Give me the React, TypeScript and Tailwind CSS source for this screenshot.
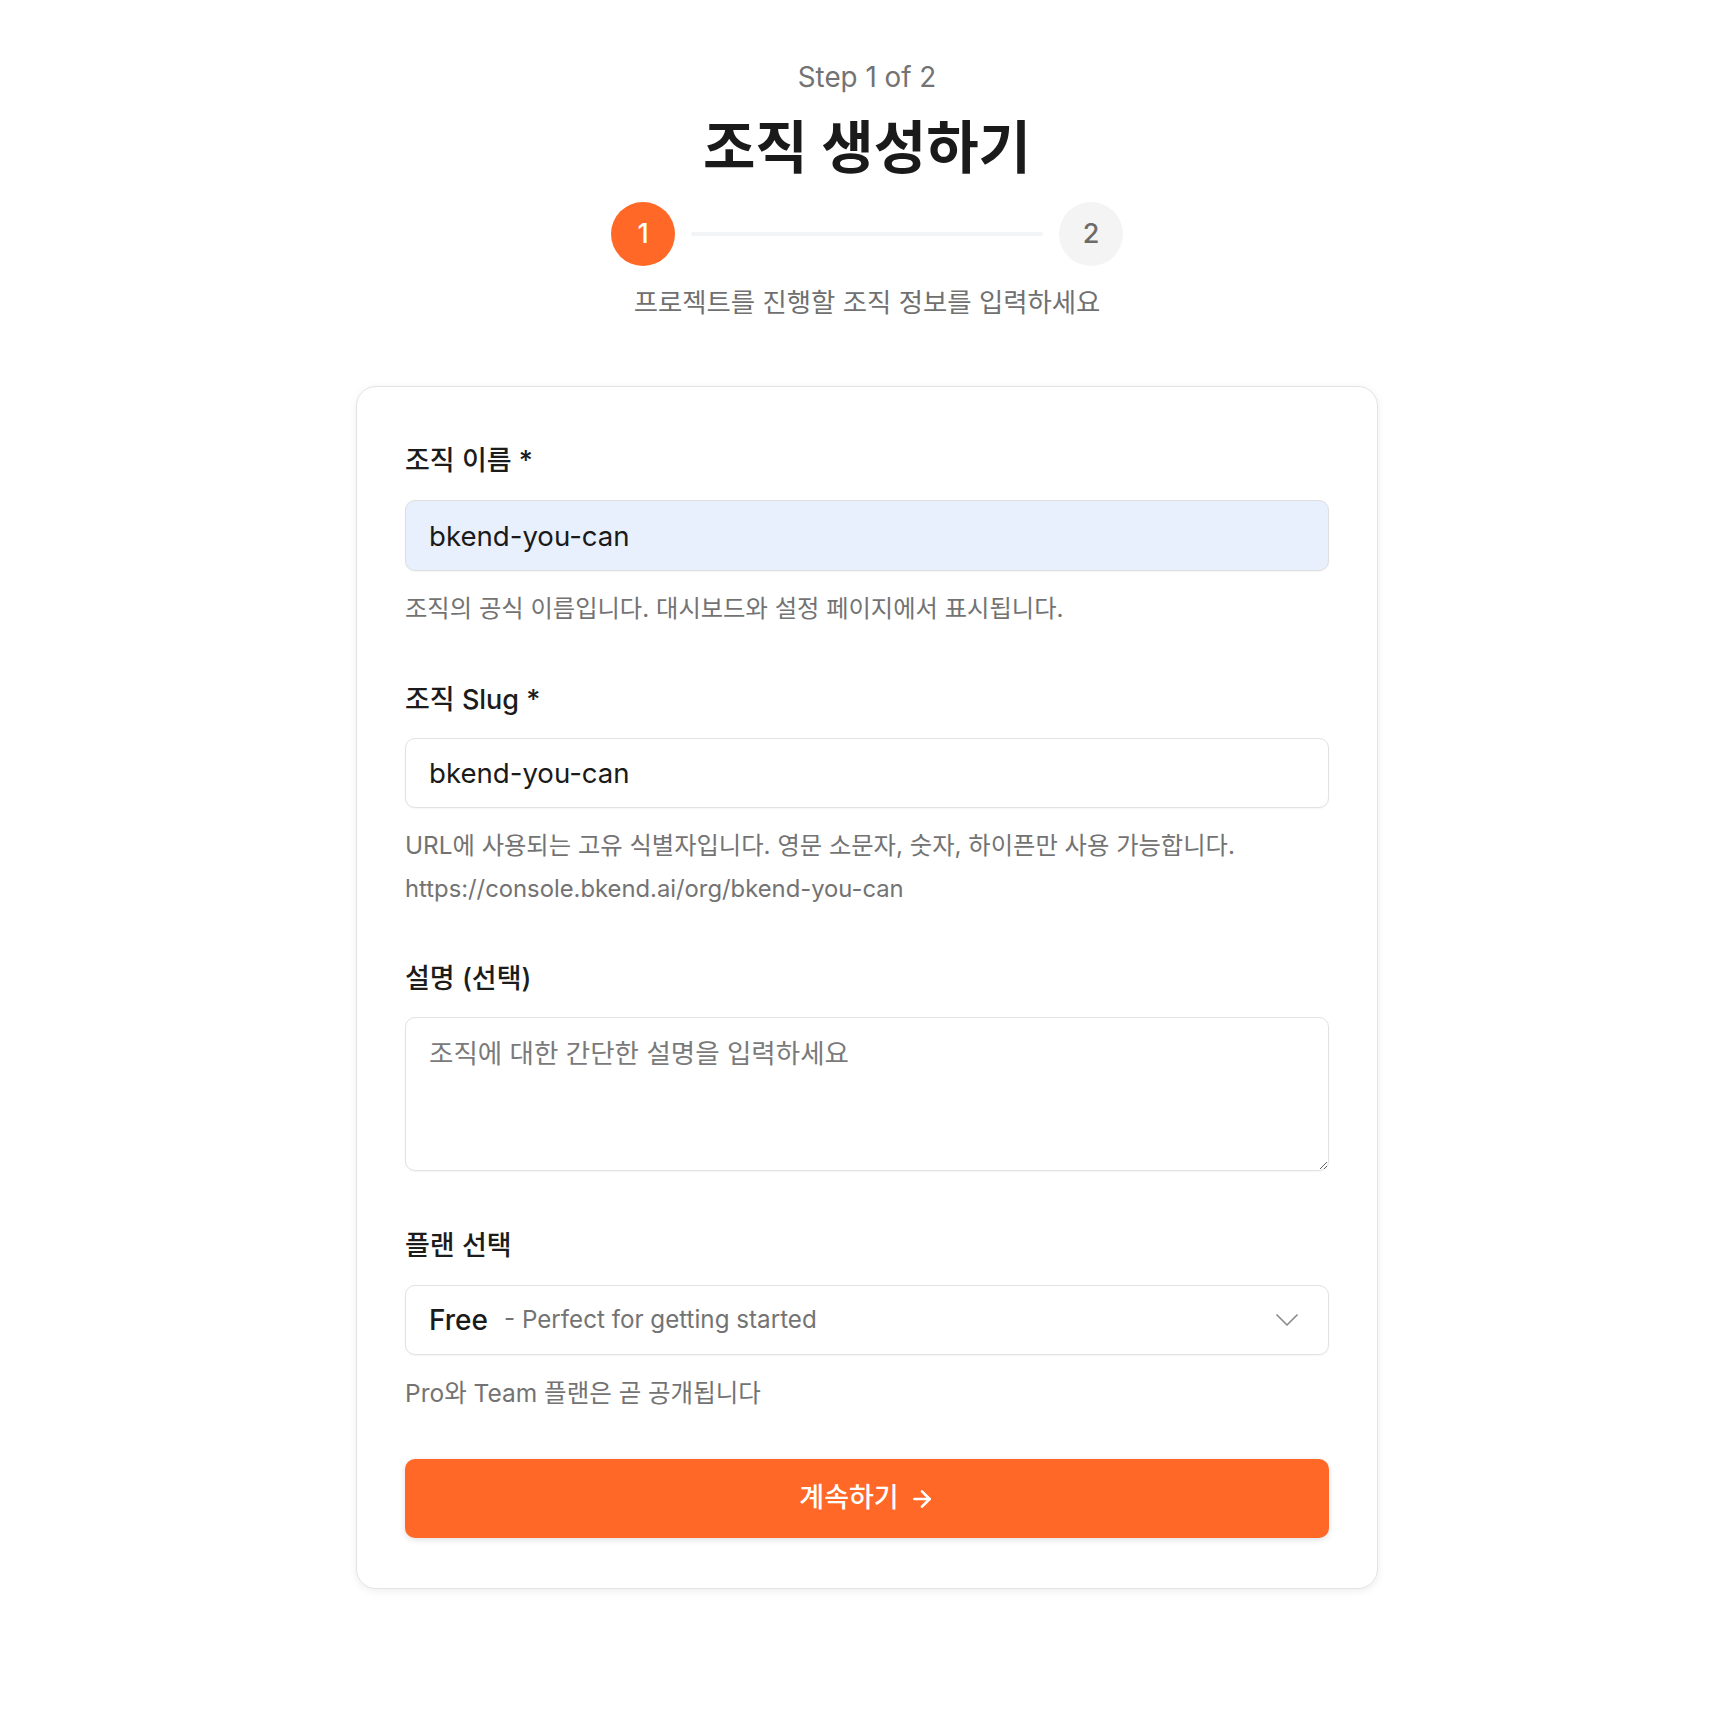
import { ArrowRight } from 'lucide-react';

function Label({ children, className = '' }: { children: React.ReactNode; className?: string }) {
  return (
    <div className={`h-[36px] leading-[36px] text-[27px] font-medium text-[#1c1c1c] ${className}`}>
      {children}
    </div>
  );
}

function Helper({ children, className = '' }: { children: React.ReactNode; className?: string }) {
  return <p className={`text-[24.3px] leading-[34px] text-[#737373] ${className}`}>{children}</p>;
}

export default function App() {
  return (
    <div className="min-h-screen bg-white flex flex-col items-center pl-[4px] pt-[59px] pb-[124px] font-[family-name:Inter,'Noto_Sans_CJK_KR',sans-serif]">
      <div className="text-[27.8px] leading-[36px] text-[#737373]">Step 1 of 2</div>
      <h1 className="mt-[21px] text-[57px] leading-[64px] font-bold text-[#1a1a1a]">조직 생성하기</h1>

      <div className="mt-[22px] flex items-center">
        <div className="w-16 h-16 rounded-full bg-[#ff6826] text-white flex items-center justify-center text-[27px] font-medium">
          1
        </div>
        <div className="mx-4 w-[352px] h-[4px] rounded-full bg-[#f3f4f6]" />
        <div className="w-16 h-16 rounded-full bg-[#f4f4f5] text-[#6b6b6b] flex items-center justify-center text-[27px] font-medium">
          2
        </div>
      </div>

      <p className="mt-[19px] text-[26.4px] leading-[34px] text-[#707070]">프로젝트를 진행할 조직 정보를 입력하세요</p>

      <div className="mt-[67px] w-[1022px] bg-white border border-[#e3e3e3] rounded-[20px] shadow-[0_2px_8px_rgba(0,0,0,0.07)] px-12 pt-[56px] pb-[50px]">
        {/* org name */}
        <Label>조직 이름 *</Label>
        <input
          defaultValue="bkend-you-can"
          className="mt-[21px] block w-full h-[71px] rounded-[10px] border border-[#dedede] bg-[#e8f0fe] px-[23px] text-[27.6px] text-[#1a1a1a] outline-none shadow-[0_1px_2px_rgba(0,0,0,0.04)]"
        />
        <Helper className="mt-[20px]">조직의 공식 이름입니다. 대시보드와 설정 페이지에서 표시됩니다.</Helper>

        {/* slug */}
        <Label className="mt-[57px]">조직 Slug *</Label>
        <input
          defaultValue="bkend-you-can"
          className="mt-[20px] block w-full h-[70px] rounded-[10px] border border-[#e2e2e2] bg-white px-[23px] text-[27.6px] text-[#1a1a1a] outline-none shadow-[0_1px_2px_rgba(0,0,0,0.04)]"
        />
        <Helper className="mt-[20px]">URL에 사용되는 고유 식별자입니다. 영문 소문자, 숫자, 하이픈만 사용 가능합니다.</Helper>
        <p className="mt-[10px] text-[23.8px] leading-[34px] text-[#737373]">https://console.bkend.ai/org/bkend-you-can</p>

        {/* description */}
        <Label className="mt-[55px]">설명 (선택)</Label>
        <textarea
          placeholder="조직에 대한 간단한 설명을 입력하세요"
          className="mt-[20px] block w-full h-[154px] rounded-[10px] border border-[#e2e2e2] bg-white px-[23px] py-[18px] text-[26.5px] leading-[34px] text-[#1a1a1a] placeholder:text-[#7a7a7a] outline-none shadow-[0_1px_2px_rgba(0,0,0,0.04)]"
        />

        {/* plan */}
        <Label className="mt-[57px]">플랜 선택</Label>
        <div className="mt-[21px] w-full h-[70px] rounded-[10px] border border-[#e2e2e2] bg-white pl-[23px] pr-[30px] flex items-center shadow-[0_1px_2px_rgba(0,0,0,0.04)]">
          <span className="text-[28px] font-medium text-[#1a1a1a]">Free</span>
          <span className="ml-[16px] text-[24.2px] text-[#737373]">- Perfect for getting started</span>
          <svg className="ml-auto" width="22" height="12" viewBox="0 0 22 12" fill="none">
            <path d="M1 1l10 10 10-10" stroke="#8c8c8c" strokeWidth="1.7" strokeLinecap="round" strokeLinejoin="round" />
          </svg>
        </div>
        <p className="mt-[21px] text-[24.5px] leading-[34px] text-[#737373]">Pro와 Team 플랜은 곧 공개됩니다</p>

        <button className="mt-[49px] w-full h-[79px] rounded-[10px] bg-[#ff6826] text-white text-[27px] font-medium flex items-center justify-center gap-[10px] shadow-[0_2px_6px_rgba(0,0,0,0.12)]">
          계속하기
          <ArrowRight className="w-[26px] h-[26px]" strokeWidth={2.5} />
        </button>
      </div>
    </div>
  );
}
